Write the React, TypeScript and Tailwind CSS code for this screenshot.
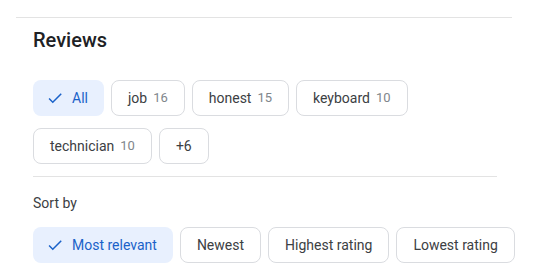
import React from "react";

function Check() {
  return (
    <svg width="18" height="18" viewBox="0 0 24 24" fill="currentColor" aria-hidden="true">
      <path d="M9 16.17L4.83 12l-1.42 1.41L9 19 21 7l-1.41-1.41z" />
    </svg>
  );
}

function Chip({ label, count, selected }: { label: string; count?: number; selected?: boolean }) {
  if (selected) {
    return (
      <div className="flex h-9 shrink-0 items-center gap-2 rounded-lg border border-transparent bg-[#e8f0fe] pl-3 pr-[15px] text-[14px] text-[#1a62c9]">
        <Check />
        <span>{label}</span>
      </div>
    );
  }
  return (
    <div className="flex h-9 shrink-0 items-center gap-[6px] rounded-lg border border-[#dadce0] bg-white px-4 text-[14px] text-[#3c4043]">
      <span>{label}</span>
      {count !== undefined && <span className="text-[13px] text-[#80868b]">{count}</span>}
    </div>
  );
}

export default function App() {
  return (
    <div className="h-[274px] w-[538px] overflow-hidden bg-white font-['Roboto',sans-serif]">
      <div className="ml-4 mt-[17px] h-px w-[496px] bg-[#e3e3e3]" />
      <div className="pl-[33px]">
        <h2 className="mt-2 text-[20px] font-medium leading-[28px] text-[#202124]">Reviews</h2>
        <div className="mt-[26px] flex w-[464px] flex-wrap gap-x-[7px] gap-y-3">
          <Chip label="All" selected />
          <Chip label="job" count={16} />
          <Chip label="honest" count={15} />
          <Chip label="keyboard" count={10} />
          <Chip label="technician" count={10} />
          <Chip label="+6" />
        </div>
        <div className="mt-3 h-px w-[464px] bg-[#e3e3e3]" />
        <div className="mt-4 text-[14px] leading-[20px] text-[#3c4043]">Sort by</div>
        <div className="mt-[14px] flex w-[482px] gap-[7px] overflow-hidden">
          <Chip label="Most relevant" selected />
          <Chip label="Newest" />
          <Chip label="Highest rating" />
          <Chip label="Lowest rating" />
        </div>
      </div>
    </div>
  );
}
